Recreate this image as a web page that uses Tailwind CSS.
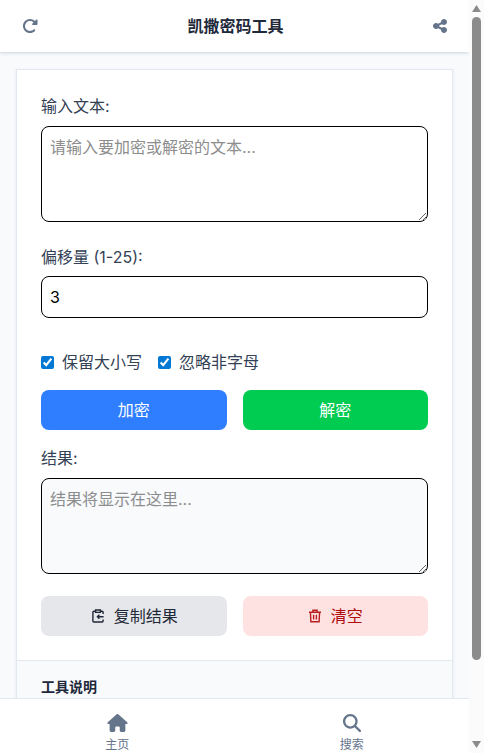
<!DOCTYPE html>
<html lang="zh"><head><meta charset="utf-8">
<script src="https://cdn.jsdelivr.net/npm/@tailwindcss/browser@4"></script>
<title>凯撒密码工具</title></head>
<body class="h-screen overflow-hidden bg-[#f8fafc] font-['Inter','Noto_Sans_CJK_SC',sans-serif] text-[#334155]">
<div class="relative flex h-[753px] w-[484px]">
  <div class="relative h-full w-[469px] overflow-hidden">
    <header class="flex h-[52px] items-center justify-between bg-white pl-[22px] pr-[22px] shadow-[0_1px_3px_rgba(148,163,184,0.45)]">
      <svg class="h-[16px] w-[16px] fill-[#64748b]" viewBox="0 0 512 512"><path d="M463.5 224H472c13.3 0 24-10.7 24-24V72c0-9.7-5.8-18.5-14.8-22.2s-19.3-1.7-26.2 5.2L413.4 96.6c-87.6-86.5-228.7-86.2-315.8 1c-87.5 87.5-87.5 229.3 0 316.8s229.3 87.5 316.8 0c12.5-12.5 12.5-32.8 0-45.3s-32.8-12.5-45.3 0c-62.5 62.5-163.8 62.5-226.3 0s-62.5-163.8 0-226.3c62.2-62.2 162.7-62.5 225.3-1L327 183c-6.9 6.9-8.9 17.2-5.2 26.2s12.5 14.8 22.2 14.8H463.5z"/></svg>
      <h1 class="text-base font-bold text-[#1e293b]">凯撒密码工具</h1>
      <svg class="h-[16px] w-[14px] fill-[#64748b]" viewBox="0 0 448 512"><path d="M352 224c53 0 96-43 96-96s-43-96-96-96s-96 43-96 96c0 4 .2 8 .7 11.9l-94.1 47C145.4 170.2 121.9 160 96 160c-53 0-96 43-96 96s43 96 96 96c25.9 0 49.4-10.2 66.6-26.9l94.1 47c-.5 3.9-.7 7.8-.7 11.9c0 53 43 96 96 96s96-43 96-96s-43-96-96-96c-25.9 0-49.4 10.2-66.6 26.9l-94.1-47c.5-3.9 .7-7.8 .7-11.9s-.2-8-.7-11.9l94.1-47C302.6 213.8 326.1 224 352 224z"/></svg>
    </header>
    <main class="px-4 pt-[17px]">
      <section class="border border-[#e2e8f0] bg-white shadow-[0_1px_3px_rgba(148,163,184,0.2)]">
        <div class="p-6">
          <label class="mb-2 block text-base leading-[24px]">输入文本:</label>
          <textarea rows="4" placeholder="请输入要加密或解密的文本..." class="block h-[96px] w-full resize-y rounded-lg border border-black bg-white p-2 text-base leading-[24px] text-black placeholder:text-[#8d8d8d]"></textarea>
          <label class="mt-[23px] mb-[7px] block text-base leading-[24px]">偏移量 (1-25):</label>
          <input type="number" value="3" min="1" max="25" class="block h-[42px] w-full rounded-lg border border-black bg-white px-2 text-base text-black">
          <div class="mt-8 flex h-[24px] items-center gap-4">
            <label class="flex items-center gap-2 text-base"><input type="checkbox" checked class="h-[13px] w-[13px] accent-[#0078d4]">保留大小写</label>
            <label class="flex items-center gap-2 text-base"><input type="checkbox" checked class="h-[13px] w-[13px] accent-[#0078d4]">忽略非字母</label>
          </div>
          <div class="mt-4 grid grid-cols-2 gap-4">
            <button class="h-10 rounded-lg bg-[#2e7eff] text-base text-white">加密</button>
            <button class="h-10 rounded-lg bg-[#00cc52] text-base text-white">解密</button>
          </div>
          <label class="mt-4 mb-2 block text-base leading-[24px]">结果:</label>
          <textarea rows="4" readonly placeholder="结果将显示在这里..." class="block h-[96px] w-full resize-y rounded-lg border border-black bg-[#f8fafc] p-2 text-base leading-[24px] placeholder:text-[#8d8d8d]"></textarea>
          <div class="mt-[22px] grid grid-cols-2 gap-4">
            <button class="flex h-10 items-center justify-center gap-[10px] rounded-lg bg-[#e5e7eb] pl-[2px] text-base text-[#1f2937]">
              <svg class="h-[14px] w-[12px] fill-none stroke-[#1f2937] stroke-[1.4]" viewBox="0 0 12 14"><path d="M3 2.2H1.9a1 1 0 0 0-1 1V12a1 1 0 0 0 1 1h8.2a1 1 0 0 0 1-1v-1.6M11.1 5V3.2a1 1 0 0 0-1-1H9"/><path d="M3.6 1h4.8v2.4H3.6z"/><path d="M11.6 7.7H5.4M7.4 5.7l-2 2 2 2"/></svg>
              复制结果</button>
            <button class="flex h-10 items-center justify-center gap-[10px] rounded-lg bg-[#fee2e2] pl-[1px] text-base text-[#b00d0d]">
              <svg class="h-[14px] w-[12px] fill-none stroke-[#b91c1c] stroke-[1.4]" viewBox="0 0 12 14"><path d="M0 3.3h12M3.9 3.3V1.2h4.2v2.1M1.4 3.3l.5 9.5h8.2l.5-9.5M4.6 5.8v4.6M7.4 5.8v4.6"/></svg>
              清空</button>
          </div>
        </div>
        <div class="border-t border-[#e2e8f0] bg-[#f8fafc] px-6 pt-4 pb-6">
          <h2 class="text-sm leading-[20px] font-bold text-[#1e293b]">工具说明</h2>
        </div>
      </section>
    </main>
    <nav class="absolute right-0 bottom-0 left-0 grid h-[55px] grid-cols-2 border-t border-[#e2e8f0] bg-white">
      <a class="flex flex-col items-center pt-[15px] text-xs leading-[16px] text-[#64748b]">
        <svg class="mb-[5px] h-[18px] w-[21px] fill-[#64748b]" viewBox="0 0 576 512"><path d="M575.8 255.5c0 18-15 32.1-32 32.1h-32l.7 160.2c0 2.7-.2 5.4-.5 8.1V472c0 22.1-17.9 40-40 40H456c-1.1 0-2.2 0-3.3-.1c-1.4 .1-2.8 .1-4.2 .1H416 392c-22.1 0-40-17.9-40-40V448 384c0-17.7-14.3-32-32-32H256c-17.7 0-32 14.3-32 32v64 24c0 22.1-17.9 40-40 40H160 128.1c-1.5 0-3-.1-4.5-.2c-1.2 .1-2.4 .2-3.6 .2H104c-22.1 0-40-17.9-40-40V360c0-.9 0-1.9 .1-2.8V287.6H32c-18 0-32-14-32-32.1c0-9 3-17 10-24L266.4 8c7-7 15-8 22-8s15 2 21 7L564.8 231.5c8 7 12 15 11 24z"/></svg>
        主页</a>
      <a class="flex flex-col items-center pt-[15px] text-xs leading-[16px] text-[#64748b]">
        <svg class="mb-[5px] h-[18px] w-[18px] fill-[#64748b]" viewBox="0 0 512 512"><path d="M416 208c0 45.9-14.9 88.3-40 122.7L502.6 457.4c12.5 12.5 12.5 32.8 0 45.3s-32.8 12.5-45.3 0L330.7 376c-34.4 25.2-76.8 40-122.7 40C93.1 416 0 322.9 0 208S93.1 0 208 0S416 93.1 416 208zM208 352a144 144 0 1 0 0-288 144 144 0 1 0 0 288z"/></svg>
        搜索</a>
    </nav>
  </div>
  <div class="relative flex h-full w-[15px] flex-col items-center bg-[#fbfbfb]">
    <svg class="mt-[5px] h-[7px] w-[9px] shrink-0 fill-[#8b8b8b]" viewBox="0 0 9 7"><path d="M4.5 0 9 7H0z"/></svg>
    <div class="mt-[5px] h-[643px] w-[9px] shrink-0 rounded-full bg-[#8b8b8b]"></div>
    <svg class="mt-auto mb-[5px] h-[7px] w-[9px] shrink-0 fill-[#8b8b8b]" viewBox="0 0 9 7"><path d="M4.5 7 9 0H0z"/></svg>
  </div>
</div>
</body></html>
